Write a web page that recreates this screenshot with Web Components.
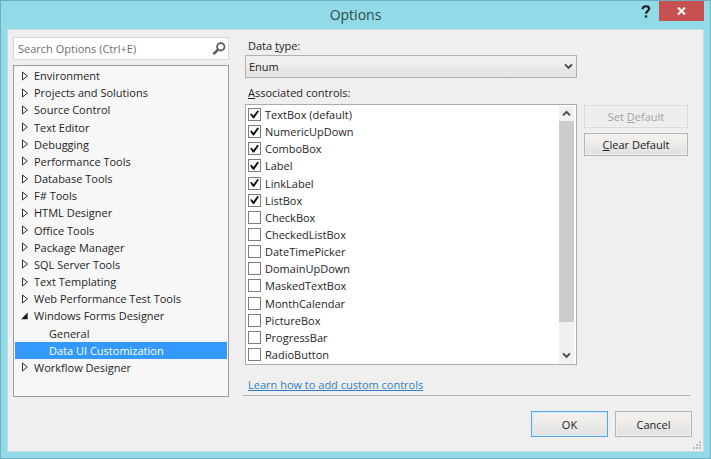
<!DOCTYPE html>
<html lang="en">
<head>
<meta charset="utf-8">
<title>Options</title>
<style>
  html, body { height: 100%; margin: 0; }
  body {
    --face: #efefef;
    font: 11px/17px "Open Sans", "Noto Sans", sans-serif;
    color: #1e1e1e;
  }
</style>
</head>
<body>
<options-window heading="Options">
  <options-nav slot="nav"></options-nav>
  <data-ui-page slot="page"></data-ui-page>
  <push-button slot="actions" size="large" primary>OK</push-button>
  <push-button slot="actions" size="large">Cancel</push-button>
</options-window>

<script>
const define = (name, html, setup) => {
  const template = document.createElement('template');
  template.innerHTML = '<style>*{box-sizing:border-box}:host{box-sizing:border-box}</style>' + html;
  customElements.define(name, class extends HTMLElement {
    constructor() {
      super();
      this.attachShadow({ mode: 'open' }).append(template.content.cloneNode(true));
    }
    connectedCallback() { if (setup) setup(this, this.shadowRoot); }
  });
};

define('push-button', `
<style>
  :host { display: block; }
  button {
    width: 100%; height: 23px; padding: 0; font: inherit; color: #1c1c1c;
    border: 1px solid #b3b3b3; background: linear-gradient(#f2f2f2, #efebe7 50%, #e6e6e6 60%, #e3e3e3);
    box-shadow: inset 0 0 0 1px #f1f1f1;
  }
  button:disabled { color: #a3a3a3; border-color: #d8dade; background: #eeeeee; }
  :host([size=large]) { width: 77px; }
  :host([size=large]) button { height: 26px; }
  :host([primary]) button { border-color: #56a5f5; box-shadow: inset 0 0 0 1px #d8eaf8; }
</style>
<button type="button"><slot></slot></button>`, (host, root) => {
  root.querySelector('button').disabled = host.hasAttribute('disabled');
});

define('search-box', `
<style>
  :host { display: flex; height: 23px; background: #fff; border: 1px solid #d2d8e0; }
  input { flex: 1; min-width: 0; border: 0; padding: 0 4px; background: none; font: inherit; color: inherit; outline: 0; }
  input::placeholder { color: #6e6e6e; opacity: 1; }
  button { border: 0; padding: 0; background: none; width: 18px; display: grid; place-items: center; }
</style>
<input type="text" aria-label="Search Options" placeholder="Search Options (Ctrl+E)">
<button type="button" aria-label="Search">
  <svg width="14" height="14" viewBox="0 0 14 14" fill="none" stroke="#5c5c5c">
    <circle cx="8.8" cy="4.8" r="3.7" stroke-width="1.8"/><path d="M6 7.6 1.4 12.2" stroke-width="2.6"/>
  </svg>
</button>`);

define('tree-node', `
<style>
  :host { display: flex; align-items: center; padding-left: 5px; min-width: 0; }
  svg { flex: none; width: 10px; height: 10px; margin-right: 4px; fill: none; stroke: #333; }
  span { white-space: nowrap; }
  :host([state=open]) svg { fill: #1a1a1a; stroke: none; }
  :host([level="2"]) { padding-left: 34px; }
  :host([level="2"]) svg { display: none; }
  :host([selected]) { background: #3399ff; color: #fff; }
</style>
<svg viewBox="0 0 10 10" aria-hidden="true"><path d="M2.5 1v8L7.4 5z"/></svg><span><slot></slot></span>`, (host, root) => {
  host.setAttribute('role', 'treeitem');
  if (host.getAttribute('state') === 'open')
    root.querySelector('path').setAttribute('d', 'M7.6 1.6v6.6H1.2z');
});

define('options-nav', `
<style>
  :host { display: flex; flex-direction: column; gap: 5px; }
  .tree {
    flex: 1; display: grid; grid-auto-rows: 1fr; background: #f7f7f7;
    border: 1px solid #979ca8; padding: 1px 1px 20px;
  }
</style>
<search-box></search-box>
<div class="tree" role="tree">
  <tree-node>Environment</tree-node>
  <tree-node>Projects and Solutions</tree-node>
  <tree-node>Source Control</tree-node>
  <tree-node>Text Editor</tree-node>
  <tree-node>Debugging</tree-node>
  <tree-node>Performance Tools</tree-node>
  <tree-node>Database Tools</tree-node>
  <tree-node>F# Tools</tree-node>
  <tree-node>HTML Designer</tree-node>
  <tree-node>Office Tools</tree-node>
  <tree-node>Package Manager</tree-node>
  <tree-node>SQL Server Tools</tree-node>
  <tree-node>Text Templating</tree-node>
  <tree-node>Web Performance Test Tools</tree-node>
  <tree-node state="open">Windows Forms Designer</tree-node>
  <tree-node level="2">General</tree-node>
  <tree-node level="2" selected>Data UI Customization</tree-node>
  <tree-node>Workflow Designer</tree-node>
</div>`);

define('check-item', `
<style>
  :host { display: flex; align-items: center; }
  label { display: flex; align-items: center; gap: 4px; white-space: nowrap; }
  input { appearance: none; width: 13px; height: 13px; margin: 0; border: 1px solid #7d7d7d; background: #fff; display: grid; place-items: center; }
  input:checked::after {
    content: ""; width: 9px; height: 9px; background: #111;
    clip-path: polygon(0 44%, 18% 38%, 38% 62%, 82% 4%, 100% 12%, 46% 92%, 32% 92%);
  }
</style>
<label><input type="checkbox"><span><slot></slot></span></label>`, (host, root) => {
  root.querySelector('input').checked = host.hasAttribute('checked');
});

define('scroll-strip', `
<style>
  :host { display: flex; flex-direction: column; width: 15px; background: #f0f0f0; }
  button { border: 0; padding: 0; height: 15px; background: #f0f0f0; display: grid; place-items: center; }
  .track { flex: 1; display: flex; flex-direction: column; }
  .thumb { flex: 199; background: #cbcbcb; }
  .rest { flex: 26; }
  svg { fill: none; stroke: #4a4a4a; stroke-width: 2; }
</style>
<button type="button" aria-label="Scroll up"><svg width="9" height="7" viewBox="0 0 9 7"><path d="M1 5.4 4.5 1.9 8 5.4"/></svg></button>
<div class="track"><div class="thumb"></div><div class="rest"></div></div>
<button type="button" aria-label="Scroll down"><svg width="9" height="7" viewBox="0 0 9 7"><path d="M1 1.4 4.5 4.9 8 1.4"/></svg></button>`);

define('check-list', `
<style>
  :host { display: flex; background: #fff; border: 1px solid #a6abb5; padding: 1px 2px; }
  .rows { flex: 1; display: grid; grid-auto-rows: 1fr; }
</style>
<div class="rows"><slot></slot></div><scroll-strip></scroll-strip>`);

define('data-ui-page', `
<style>
  :host {
    display: grid; grid-template: 18px 23px 26px 1fr 30px / 1fr 104px; column-gap: 7px;
    padding: 0 2px; margin-bottom: 1px; border-bottom: 1px solid #b2b2b2;
  }
  .caption { grid-column: 1 / -1; padding-left: 3px; }
  .combo { display: grid; }
  .combo > * { grid-area: 1 / 1; }
  select {
    appearance: none; width: 100%; height: 23px; font: inherit; color: inherit; padding: 0 3px; border-radius: 0;
    border: 1px solid #b0b0b0; background: linear-gradient(#f0f0f0, #efebe8 50%, #e6e6e6 60%, #e5e5e5);
  }
  .combo svg { place-self: center end; margin-right: 4px; pointer-events: none; fill: none; stroke: #4a4a4a; stroke-width: 2; }
  .list-caption { align-self: end; padding-bottom: 3px; }
  check-list { grid-area: 4 / 1; }
  .side { grid-area: 4 / 2; display: flex; flex-direction: column; gap: 5px; padding-top: 1px; }
  a { grid-area: 5 / 1; justify-self: start; align-self: end; padding: 0 0 2px 3px; color: #2f7fc6; }
</style>
<label class="caption" for="type">Data <u>t</u>ype:</label>
<div class="combo">
  <select id="type"><option>Enum</option></select>
  <svg width="9" height="7" viewBox="0 0 9 7"><path d="M1 1.4 4.5 4.9 8 1.4"/></svg>
</div>
<div class="caption list-caption" id="assoc"><u>A</u>ssociated controls:</div>
<check-list role="group" aria-labelledby="assoc">
  <check-item checked>TextBox (default)</check-item>
  <check-item checked>NumericUpDown</check-item>
  <check-item checked>ComboBox</check-item>
  <check-item checked>Label</check-item>
  <check-item checked>LinkLabel</check-item>
  <check-item checked>ListBox</check-item>
  <check-item>CheckBox</check-item>
  <check-item>CheckedListBox</check-item>
  <check-item>DateTimePicker</check-item>
  <check-item>DomainUpDown</check-item>
  <check-item>MaskedTextBox</check-item>
  <check-item>MonthCalendar</check-item>
  <check-item>PictureBox</check-item>
  <check-item>ProgressBar</check-item>
  <check-item>RadioButton</check-item>
</check-list>
<div class="side">
  <push-button disabled>Set <u>D</u>efault</push-button>
  <push-button><u>C</u>lear Default</push-button>
</div>
<a href="#learn">Learn how to add custom controls</a>`);

define('options-window', `
<style>
  :host {
    display: flex; flex-direction: column; min-height: 100%;
    background: #90dbe7; border: 1px solid #6fb0c0; padding: 0 6px 6px;
  }
  header { display: grid; grid-template-columns: 1fr auto 1fr; height: 28px; }
  h1 { grid-column: 2; margin: 0; font-size: 14px; font-weight: 400; line-height: 28px; color: #31474c; }
  .tools { display: flex; justify-content: flex-end; align-items: start; }
  .tools button { border: 0; padding: 0; height: 20px; display: grid; place-items: center; background: none; }
  .help { width: 26px; }
  .tools .close { width: 45px; background: #c75050; }
  main {
    flex: 1; display: grid; grid-template: 1fr 54px / 216px 1fr; column-gap: 14px;
    background: var(--face); border: 1px solid #c3dde1; padding: 7px 13px 0 5px;
  }
  ::slotted([slot=nav]), ::slotted([slot=page]) { grid-row: 1; }
  footer { grid-column: 1 / -1; display: flex; justify-content: flex-end; gap: 7px; padding-top: 14px; margin-right: -2px; }
  .grip { position: absolute; right: 9px; bottom: 9px; fill: #bcbcbc; }
</style>
<header>
  <h1></h1>
  <div class="tools">
    <button class="help" type="button" aria-label="Help">
      <svg width="10" height="13" viewBox="0 0 10 13" fill="none" stroke="#1c1c1c" stroke-width="2.2"><path d="M1.6 4.2C1.4 .4 8.2 .3 8.2 3.6 8.2 6 5 5.6 5 8.8"/><path d="M5 10.4v2.2" stroke-width="2.4"/></svg>
    </button>
    <button class="close" type="button" aria-label="Close">
      <svg width="9" height="8" viewBox="0 0 9 8" fill="none" stroke="#fff" stroke-width="2"><path d="M1 .5 8 7.5M8 .5 1 7.5"/></svg>
    </button>
  </div>
</header>
<main>
  <slot name="nav"></slot>
  <slot name="page"></slot>
  <footer><slot name="actions"></slot></footer>
</main>
<svg class="grip" width="9" height="9" viewBox="0 0 9 9" aria-hidden="true"><path d="M6 0h2v2H6zM3 3h2v2H3zM6 3h2v2H6zM0 6h2v2H0zM3 6h2v2H3zM6 6h2v2H6z"/></svg>`, (host, root) => {
  root.querySelector('h1').textContent = host.getAttribute('heading');
});
</script>
</body>
</html>
